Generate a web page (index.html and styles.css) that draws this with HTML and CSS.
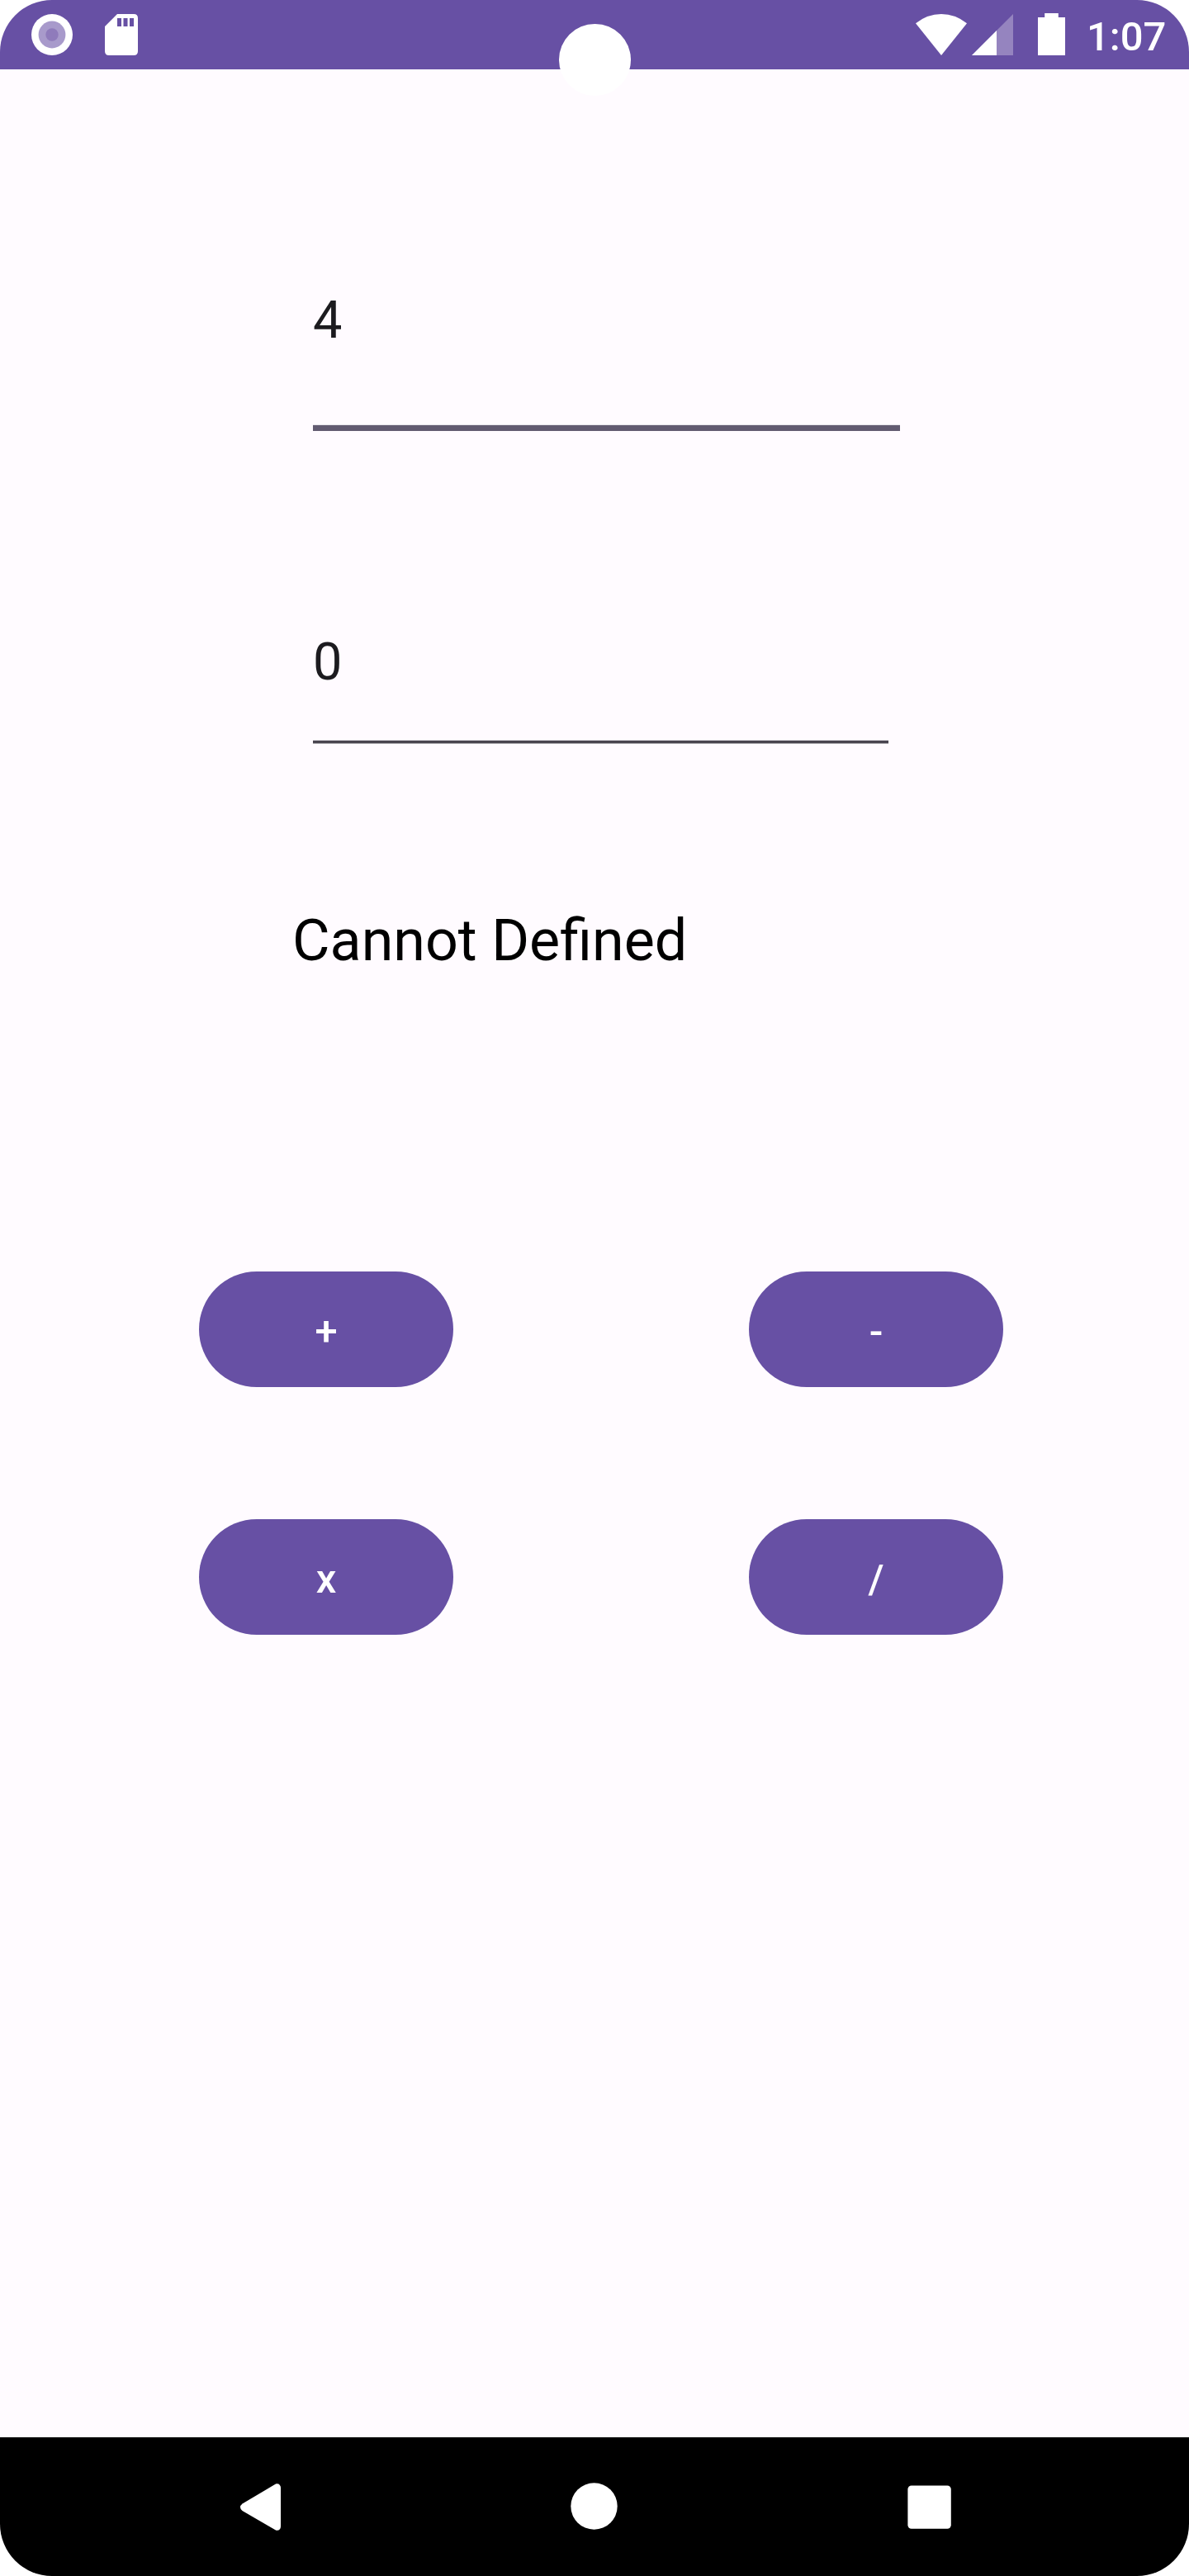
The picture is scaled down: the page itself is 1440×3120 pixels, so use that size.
FILE: index.html
```html
<!DOCTYPE html>
<html lang="en">
<head>
<meta charset="utf-8">
<title>Calculator</title>
<link rel="stylesheet" href="styles.css">
</head>
<body>
<div class="screen">
  <header class="status-bar">
    <div class="status-left">
      <svg width="50" height="50" viewBox="0 0 50 50"><circle cx="25" cy="25" r="25" fill="#fff"/><circle cx="25" cy="25" r="16.4" fill="#a89acb"/><circle cx="25" cy="25" r="7.7" fill="#8f7bbb"/></svg>
      <svg width="40" height="50" viewBox="0 0 40 50"><path fill="#fff" fill-rule="evenodd" d="M15 0H35Q40 0 40 5V45Q40 50 35 50H5Q0 50 0 45V15ZM15 5V15H20V5ZM22.5 5V15H27.5V5ZM30 5V15H35V5Z"/></svg>
    </div>
    <div class="status-right">
      <svg class="wifi" width="62" height="50" viewBox="0 0 62 50"><path fill="#fff" d="M0 11.3Q14 0 31 0T62 11.3L31 50Z"/></svg>
      <svg class="signal" width="50" height="50" viewBox="0 0 50 50"><path fill="#fff" fill-opacity=".3" d="M0 50H50V0Z"/><path fill="#fff" d="M0 50L30 20V50Z"/></svg>
      <svg class="battery" width="33" height="51" viewBox="0 0 33 51"><path fill="#fff" d="M8.2 0H24.8V5H33V51H0V5H8.2Z"/></svg>
      <span class="clock">1:07</span>
    </div>
    <div class="camera-cutout"></div>
  </header>
  <main class="content">
    <div class="field field-focused">4</div>
    <div class="field field-plain">0</div>
    <p class="result">Cannot Defined</p>
    <div class="keys">
      <button class="key">+</button>
      <button class="key">-</button>
      <button class="key">x</button>
      <button class="key">/</button>
    </div>
  </main>
  <nav class="nav-bar">
    <svg class="nav-back" width="49" height="57" viewBox="0 0 49 57"><path fill="#fff" d="M42.5 .7C46-.9 49 1.500 49 5V52C49 55.500 46 57.900 42.500 56.300L2.500 33Q-2.500 28.500 2.500 24.500Z"/></svg>
    <svg class="nav-home" width="57" height="57" viewBox="0 0 57 57"><circle cx="28.500" cy="28.500" r="28.200" fill="#fff"/></svg>
    <svg class="nav-recent" width="54" height="54" viewBox="0 0 54 54"><rect x=".4" y=".4" width="52.400" height="52.400" rx="4.500" fill="#fff"/></svg>
  </nav>
</div>
</body>
</html>
```
FILE: styles.css
```css
* { box-sizing: border-box; }

body {
  margin: 0;
  background: #fff;
  font-family: Roboto, sans-serif;
}

.screen {
  display: flex;
  flex-direction: column;
  width: 1440px;
  height: 3120px;
  overflow: hidden;
  border-radius: 63px;
  background: #fffbff;
}

svg { display: block; flex: none; }

.status-bar {
  position: relative;
  display: flex;
  justify-content: space-between;
  flex: none;
  height: 84px;
  padding: 0 28px 0 38px;
  background: #6750a4;
}

.status-left { display: flex; gap: 39px; padding-top: 17px; }
.status-right { display: flex; padding-top: 17px; }
.signal { margin-left: 6px; }
.battery { margin: -1px 26px 0 30px; }

.clock {
  width: 96px;
  margin-top: -1px;
  color: #fff;
  font-size: 49px;
  font-weight: 500;
  line-height: 57px;
  white-space: nowrap;
}

.camera-cutout {
  position: absolute;
  top: 29px;
  left: 677px;
  width: 86.500px;
  height: 86.500px;
  border-radius: 50%;
  background: #fff;
}

.content {
  display: flex;
  flex: 1;
  flex-direction: column;
  padding-top: 267px;
}

.field {
  flex: none;
  margin-left: 379px;
  color: #1c1b1f;
  font-size: 63px;
  line-height: 74px;
}

.field-focused {
  width: 711px;
  height: 171px;
  border-bottom: 7px solid #625b71;
  box-shadow: inset 0 -1px #e6e4ea;
}

.field-plain {
  width: 697px;
  height: 135px;
  margin-top: 243px;
  border-bottom: 3px solid #49454f;
  box-shadow: inset 0 -1px #e4e0e6, 0 1px #a5a2a8;
}

.result {
  margin: 198px 0 0 354px;
  color: #000;
  font-size: 70px;
  line-height: 82px;
}

.keys {
  display: grid;
  grid-template-columns: 308px 308px;
  grid-auto-rows: 140px;
  gap: 160px 358px;
  margin: 360px 0 0 241px;
}

.key {
  padding: 5px 0 0;
  border: 0;
  border-radius: 70px;
  background: #6750a4;
  color: #fff;
  font: 500 49px/57px Roboto, sans-serif;
}

.nav-bar {
  display: flex;
  flex: none;
  height: 168px;
  padding-left: 291px;
  background: #000;
}

.nav-back { margin-top: 56px; }
.nav-home { margin: 55px 0 0 351px; }
.nav-recent { margin: 58px 0 0 351px; }
```
